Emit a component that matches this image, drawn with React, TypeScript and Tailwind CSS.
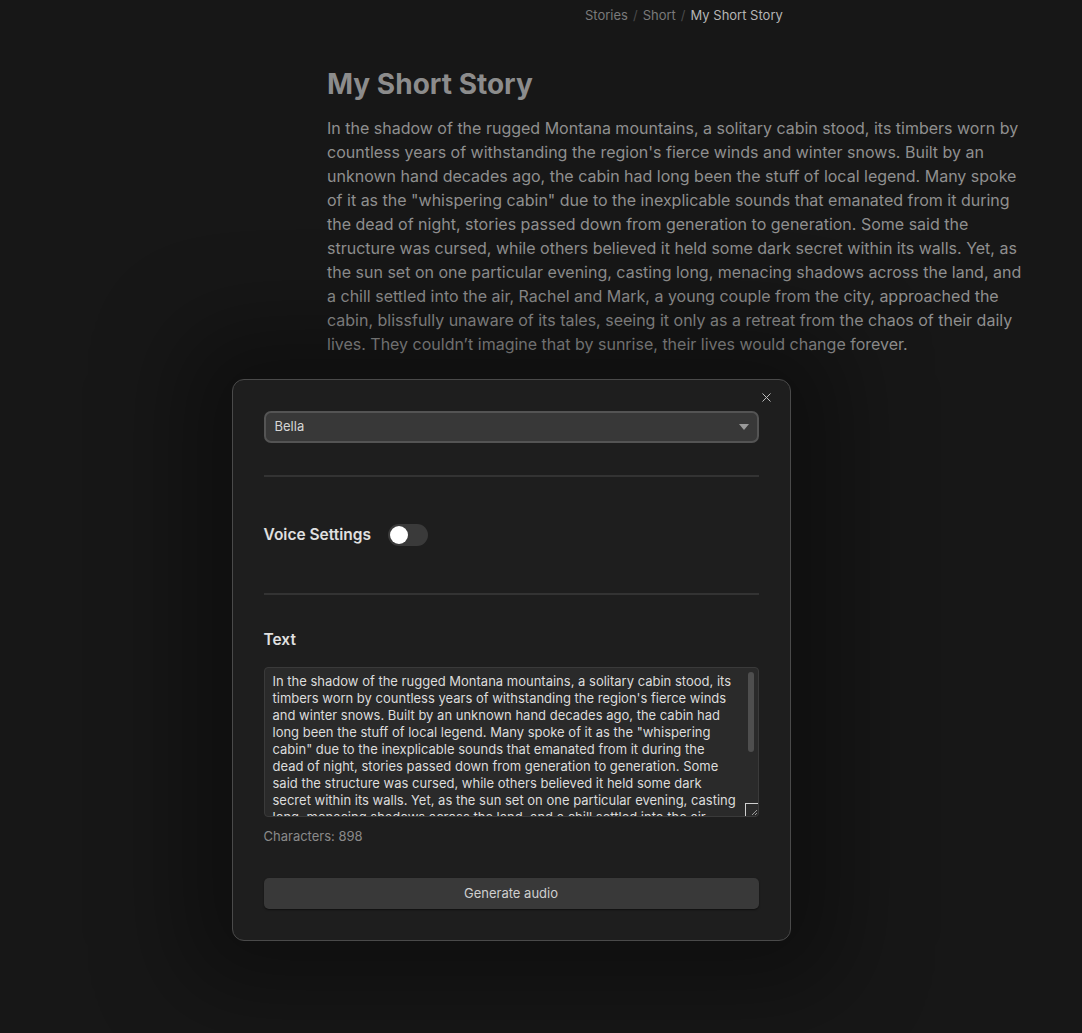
import React, { useState } from "react";
import { X } from "lucide-react";

const STORY =
  "In the shadow of the rugged Montana mountains, a solitary cabin stood, its timbers worn by countless years of withstanding the region's fierce winds and winter snows. Built by an unknown hand decades ago, the cabin had long been the stuff of local legend. Many spoke of it as the \"whispering cabin\" due to the inexplicable sounds that emanated from it during the dead of night, stories passed down from generation to generation. Some said the structure was cursed, while others believed it held some dark secret within its walls. Yet, as the sun set on one particular evening, casting long, menacing shadows across the land, and a chill settled into the air, Rachel and Mark, a young couple from the city, approached the cabin, blissfully unaware of its tales, seeing it only as a retreat from the chaos of their daily lives. They couldn\u2019t imagine that by sunrise, their lives would change forever.";

const Breadcrumbs = () => (
  <nav className="flex items-center gap-[5px] pl-[258px] pt-[7px] text-[13px] leading-[17px]">
    <span className="text-[#7a7a7a]">Stories</span>
    <span className="text-[#4a4a4a]">/</span>
    <span className="text-[#7a7a7a]">Short</span>
    <span className="text-[#4a4a4a]">/</span>
    <span className="text-[#b5b5b5]">My Short Story</span>
  </nav>
);

const Toggle = ({ on, onChange }: { on: boolean; onChange: (v: boolean) => void }) => (
  <button
    onClick={() => onChange(!on)}
    className={`relative h-[22px] w-[40px] rounded-full ${on ? "bg-[#6b6b6b]" : "bg-[#3a3a3a]"}`}
  >
    <span
      className={`absolute top-[2px] h-[18px] w-[18px] rounded-full bg-white ${on ? "left-[20px]" : "left-[2px]"}`}
    />
  </button>
);

const AudioModal = () => {
  const [voiceSettings, setVoiceSettings] = useState(false);

  return (
    <div className="relative mx-auto w-[559px] rounded-[12px] border border-[#4a4a4a] bg-[#1e1e1e] px-[31px] pb-[31px] pt-[31px] shadow-[0_0_90px_50px_rgba(0,0,0,0.35)]">
      <button className="absolute right-[16px] top-[10px] text-[#bdbdbd]">
        <X size={15} strokeWidth={1.6} />
      </button>

      <div className="flex h-[32px] items-center justify-between rounded-[7px] border-2 border-[#545454] bg-[#383838] pl-[9px] pr-[8px]">
        <span className="text-[13px] text-[#d6d6d6]">Bella</span>
        <svg width="10" height="6" viewBox="0 0 10 6" className="text-[#9a9a9a]">
          <path d="M0 0 L10 0 L5 6 Z" fill="currentColor" />
        </svg>
      </div>

      <div className="mt-[32px] h-[2px] bg-[#333333]" />

      <div className="flex h-[116px] items-center gap-[17px]">
        <span className="text-[15.5px] font-semibold text-[#e0e0e0]">Voice Settings</span>
        <Toggle on={voiceSettings} onChange={setVoiceSettings} />
      </div>

      <div className="h-[2px] bg-[#333333]" />

      <div className="mt-[33px] text-[15.5px] font-semibold text-[#e0e0e0]">Text</div>

      <div className="relative mt-[16px] h-[150px] overflow-hidden rounded-[4px] border border-[#3a3a3a] bg-[#2a2a2a]">
        <p className="pl-[8px] pr-[19px] pt-[5px] text-[13px] leading-[16.9px] text-[#dcdcdc]">{STORY}</p>
        <div className="absolute right-[4px] top-[4px] h-[80px] w-[6px] rounded-full bg-[#4e4e4e]" />
        <div className="absolute bottom-0 right-0 h-[13px] w-[13px] border-l border-t border-[#cfcfcf] bg-[#2a2a2a]">
          <svg width="12" height="12" viewBox="0 0 12 12" className="text-[#9a9a9a]">
            <path d="M11 6 L6 11 M11 9 L9 11" stroke="currentColor" strokeWidth="1" />
          </svg>
        </div>
      </div>

      <div className="mt-[10px] text-[13px] leading-[18px] text-[#8a8a8a]">Characters: 898</div>

      <button className="mt-[33px] flex h-[31px] w-full items-center justify-center rounded-[5px] bg-[#393939] text-[13px] text-[#cfcfcf] shadow-[0_1px_2px_rgba(0,0,0,0.5)]">
        Generate audio
      </button>
    </div>
  );
};

export default function App() {
  return (
    <div
      className="min-h-[1033px] w-full overflow-hidden bg-[#171717]"
      style={{ fontFamily: "Inter, 'Noto Sans', sans-serif" }}
    >
      <div className="ml-[327px] w-[700px]">
        <Breadcrumbs />
        <h1 className="mt-[43px] text-[28px] font-bold leading-[34px] text-[#8c8c8c]">
          My Short Story
        </h1>
        <p className="mt-[15px] text-[16px] leading-[24px] text-[#8f8f8f]">{STORY}</p>
      </div>
      <div className="ml-[231px] mt-[23px] w-[560px]">
        <AudioModal />
      </div>
    </div>
  );
}
